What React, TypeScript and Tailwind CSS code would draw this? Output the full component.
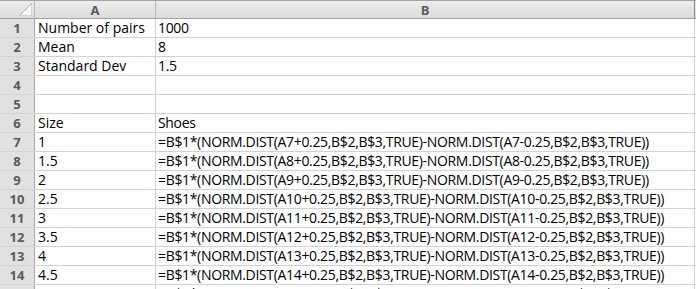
const rows: [string, string][] = [
  ["Number of pairs", "1000"],
  ["Mean", "8"],
  ["Standard Dev", "1.5"],
  ["", ""],
  ["", ""],
  ["Size", "Shoes"],
];

const sizes = ["1", "1.5", "2", "2.5", "3", "3.5", "4", "4.5", ""];

function formula(r: number) {
  return `=B$1*(NORM.DIST(A${r}+0.25,B$2,B$3,TRUE)-NORM.DIST(A${r}-0.25,B$2,B$3,TRUE))`;
}

export default function App() {
  const data: [string, string][] = [
    ...rows,
    ...sizes.map((s, i) => [s, formula(i + 7)] as [string, string]),
  ];

  return (
    <div
      className="h-[289px] w-[696px] overflow-hidden bg-white text-[14px] text-black"
      style={{ fontFamily: '"Open Sans", "Liberation Sans", sans-serif' }}
    >
      <div className="flex h-[19px] border-t border-b border-[#a3a3a3] bg-gradient-to-b from-[#ededed] to-[#dcdcdc]">
        <div className="relative w-[35px] shrink-0 border-r border-[#b5b5b5]">
          <svg className="absolute right-[2px] bottom-[2px]" width="13" height="13" viewBox="0 0 13 13">
            <polygon points="13,0 13,13 0,13" fill="#f7f7f7" stroke="#b0b0b0" strokeWidth="1" />
          </svg>
        </div>
        <div className="flex w-[121px] shrink-0 items-center justify-center border-r border-[#b5b5b5] pt-[1px] text-[13px] font-bold leading-none text-[#5b5b5b]">
          A
        </div>
        <div className="flex w-[539px] shrink-0 items-center justify-center border-r border-[#8a8a8a] pt-[1px] text-[13px] font-bold leading-none text-[#5b5b5b]">
          B
        </div>
      </div>
      {data.map(([a, b], i) => (
        <div key={i} className="flex h-[19px] border-b border-[#d2d2d2]">
          <div className="flex w-[35px] shrink-0 items-center justify-center border-r border-[#a8a8a8] bg-[#e1e1e1] text-[13px] font-bold leading-none text-[#5a5a5a]">
            {i + 1}
          </div>
          <div className="flex w-[121px] shrink-0 items-center whitespace-nowrap border-r border-[#d2d2d2] pl-[3px] leading-none">
            {a}
          </div>
          <div className="flex w-[539px] shrink-0 items-center whitespace-nowrap border-r border-[#d2d2d2] pl-[2px] leading-none tracking-[-0.33px]">
            {b}
          </div>
        </div>
      ))}
    </div>
  );
}
